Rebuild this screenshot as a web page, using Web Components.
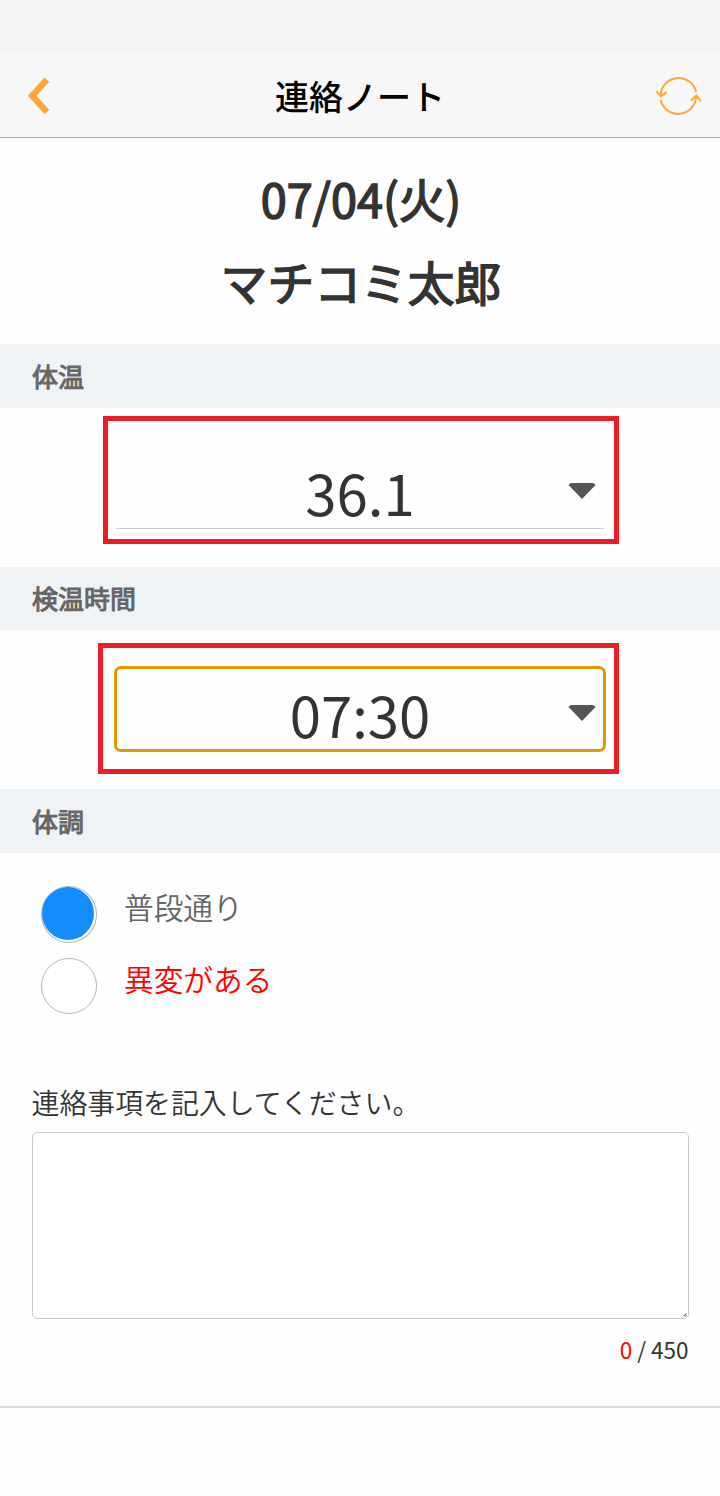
<!DOCTYPE html>
<html lang="ja">
<head>
<meta charset="UTF-8">
<title>連絡ノート</title>
<style>
  body{
    margin:0;
    background:#fefefe;
    color:#333;
    font-family:"Noto Sans CJK JP",sans-serif;
  }
</style>
</head>
<body>
  <note-page>
    <note-header slot="header">連絡ノート</note-header>
    <note-title slot="title">
      <span slot="date">07/04(火)</span>
      <span slot="name">マチコミ太郎</span>
    </note-title>
    <note-section heading="体温">
      <note-select style="--top:-30px;--left:-13px;--right:-15px;--bottom:-16px">36.1</note-select>
    </note-section>
    <note-section heading="検温時間" style="--bar:63px;--line:62px">
      <note-select focused style="--top:-25px;--left:-18px;--right:-15px;--bottom:-25px">07:30</note-select>
    </note-section>
    <note-section heading="体調" style="--body:211px">
      <note-radios>
        <note-radio checked>普段通り</note-radio>
        <note-radio style="color:#f00">異変がある</note-radio>
      </note-radios>
    </note-section>
    <note-comment count="0" max="450">連絡事項を記入してください。</note-comment>
  </note-page>

<script>
class NotePage extends HTMLElement{
  connectedCallback(){
    let shadowRoot=this.attachShadow({mode:'open'});
    shadowRoot.innerHTML=`
    <style>
      :host{
        display:flex;
        flex-direction:column;
        height:1496px;
        overflow:hidden;
      }
      main{
        box-sizing:border-box;
        height:1270px;
        border-bottom:2px solid #dbdbdb;
      }
    </style>
    <slot name="header"></slot>
    <main>
      <slot name="title"></slot>
      <slot></slot>
    </main>
    `
  }
}
window.customElements.define('note-page',NotePage)

class NoteHeader extends HTMLElement{
  connectedCallback(){
    let shadowRoot=this.attachShadow({mode:'open'});
    shadowRoot.innerHTML=`
    <style>
      :host{
        display:block;
        background:#f7f7f7;
        border-bottom:1px solid #aaa;
      }
      .status{
        height:54px;
        background:#f4f4f4;
      }
      .bar{
        display:grid;
        grid-template-columns:80px 1fr 80px;
        align-items:center;
        height:83px;
      }
      h1{
        margin:0;
        text-align:center;
        font-size:34px;
        line-height:50px;
        font-weight:500;
        color:#000;
      }
      svg{
        display:block;
        fill:none;
        stroke:#ffa633;
      }
      .back{
        margin-left:26px;
      }
      .reload{
        margin-left:14px;
      }
    </style>
    <div class="status"></div>
    <div class="bar">
      <svg class="back" width="26" height="42" viewBox="0 0 26 42" stroke-width="6.4">
        <path d="M20.9 4.6 L6.2 20.8 L20.9 37"/>
      </svg>
      <h1><slot></slot></h1>
      <svg class="reload" width="50" height="42" viewBox="0 0 50 42" stroke-width="2">
        <path d="M6.6 21.6 A18.05 18.05 0 0 1 42.2 16.9"/>
        <path d="M2.3 16.1 L6.8 21.3 L12.6 17.1"/>
        <path d="M42.2 20.6 A18.05 18.05 0 0 1 6.6 25.1"/>
        <path d="M36.8 25.6 L42.4 20.4 L46.8 26.1"/>
      </svg>
    </div>
    `
  }
}
window.customElements.define('note-header',NoteHeader)

class NoteTitle extends HTMLElement{
  connectedCallback(){
    let shadowRoot=this.attachShadow({mode:'open'});
    shadowRoot.innerHTML=`
    <style>
      :host{
        display:block;
        box-sizing:border-box;
        height:206px;
        padding:18px 0 0 2px;
        text-align:center;
        font-size:46.8px;
        line-height:83px;
        -webkit-text-stroke:1.5px currentColor;
      }
    </style>
    <div><slot name="date"></slot></div>
    <div><slot name="name"></slot></div>
    `
  }
}
window.customElements.define('note-title',NoteTitle)

class NoteSection extends HTMLElement{
  connectedCallback(){
    let shadowRoot=this.attachShadow({mode:'open'});
    shadowRoot.innerHTML=`
    <style>
      :host{
        display:block;
      }
      .heading{
        box-sizing:border-box;
        height:var(--bar,64px);
        padding-left:32px;
        background:#eff3f6;
        color:#666;
        font-size:26px;
        line-height:var(--line,63px);
        -webkit-text-stroke:1px currentColor;
      }
      .body{
        display:flow-root;
        height:var(--body,159px);
      }
    </style>
    <div class="heading">${this.getAttribute('heading')}</div>
    <div class="body"><slot></slot></div>
    `
  }
}
window.customElements.define('note-section',NoteSection)

class NoteSelect extends HTMLElement{
  connectedCallback(){
    let shadowRoot=this.attachShadow({mode:'open'});
    shadowRoot.innerHTML=`
    <style>
      :host{
        display:grid;
        grid-template-columns:44px 1fr 44px;
        align-items:center;
        box-sizing:border-box;
        position:relative;
        width:488px;
        height:83px;
        margin:38px auto 0;
        border-bottom:1px solid #ccc;
      }
      :host([focused]){
        height:82px;
        border-color:transparent;
        outline:3px solid #e59700;
        outline-offset:-1px;
        border-radius:5px;
      }
      .value{
        grid-column:2;
        text-align:center;
        font-size:56.3px;
        line-height:80px;
        padding-top:6px;
      }
      svg{
        margin:3px 0 0 8px;
        fill:#555;
      }
      /* red frame over the field */
      .mark{
        position:absolute;
        top:var(--top);
        left:var(--left);
        right:var(--right);
        bottom:var(--bottom);
        border:5px solid #ee1c25;
      }
    </style>
    <span class="value"><slot></slot></span>
    <svg width="28" height="16" viewBox="0 0 28 16">
      <path d="M0.5 2 Q1.5 0 4 0 H24 Q26.5 0 27.5 2 L14 16 Z"/>
    </svg>
    <div class="mark"></div>
    `
  }
}
window.customElements.define('note-select',NoteSelect)

class NoteRadios extends HTMLElement{
  connectedCallback(){
    let shadowRoot=this.attachShadow({mode:'open'});
    shadowRoot.innerHTML=`
    <style>
      :host{
        display:flex;
        flex-direction:column;
        gap:15px;
        padding:33px 0 0 41px;
        color:#666;
      }
    </style>
    <slot></slot>
    `
  }
}
window.customElements.define('note-radios',NoteRadios)

class NoteRadio extends HTMLElement{
  connectedCallback(){
    let shadowRoot=this.attachShadow({mode:'open'});
    shadowRoot.innerHTML=`
    <style>
      :host{
        display:flex;
        gap:27px;
        height:57px;
        font-size:29.7px;
        font-weight:350;
        line-height:42px;
      }
      .circle{
        box-sizing:border-box;
        width:56px;
        height:56px;
        border:1px solid #b5b5b5;
        border-radius:50%;
        background:#fff;
      }
      :host([checked]) .circle{
        height:57px;
      }
      :host([checked]) .circle::before{
        content:"";
        display:block;
        width:52px;
        height:53px;
        border-radius:50%;
        background:#158cff;
      }
    </style>
    <span class="circle"></span>
    <span><slot></slot></span>
    `
  }
}
window.customElements.define('note-radio',NoteRadio)

class NoteComment extends HTMLElement{
  connectedCallback(){
    let shadowRoot=this.attachShadow({mode:'open'});
    shadowRoot.innerHTML=`
    <style>
      :host{
        display:block;
        padding:17px 31px 0 32px;
      }
      label{
        display:block;
        height:51px;
        margin-left:-0.5px;
        font-size:27.9px;
        font-weight:350;
        line-height:43px;
      }
      .box{
        position:relative;
        height:187px;
      }
      textarea{
        display:block;
        box-sizing:border-box;
        width:100%;
        height:100%;
        border:1px solid #c8c8c8;
        border-radius:5px;
        background:#fff;
        resize:none;
      }
      svg{
        position:absolute;
        right:2px;
        bottom:2px;
      }
      .counter{
        padding:14px 0.5px 0 0;
        text-align:right;
        font-size:22.5px;
        line-height:32px;
      }
      b{
        font-weight:inherit;
        color:#f00;
      }
    </style>
    <label for="memo"><slot></slot></label>
    <div class="box">
      <textarea id="memo"></textarea>
      <svg width="4" height="4"><path d="M0.5 3 L3.5 0.5 M2 3.5 L3.5 2" stroke="#555" fill="none"/></svg>
    </div>
    <div class="counter"><b>${this.getAttribute('count')}</b> / ${this.getAttribute('max')}</div>
    `
  }
}
window.customElements.define('note-comment',NoteComment)
</script>
</body>
</html>
